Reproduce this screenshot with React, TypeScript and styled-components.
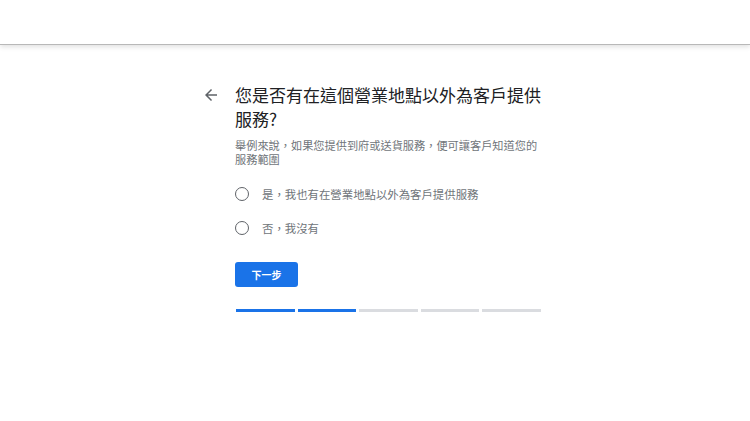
import React, { useState } from "react";
import styled, { createGlobalStyle } from "styled-components";

const GlobalStyle = createGlobalStyle`
  html, body {
    margin: 0;
    padding: 0;
    background: #ffffff;
    font-family: "Noto Sans CJK TC", "Noto Sans", Roboto, sans-serif;
    color: #202124;
  }
`;

const Page = styled("div")`
  width: 100%;
  min-height: 421px;
  display: flex;
  flex-direction: column;
`;

const Header = styled("header")`
  height: 44px;
  border-bottom: 1px solid #b8b8b8;
  box-shadow: 0 2px 5px rgba(0, 0, 0, 0.12);
`;

const Main = styled("main")`
  display: flex;
  justify-content: center;
  padding-top: 38px;
`;

const Layout = styled("div")`
  display: grid;
  grid-template-columns: 33px 310px;
  margin-right: 3px;
`;

const BackButton = styled("button")`
  border: 0;
  background: none;
  padding: 0;
  height: 24px;
  width: 18px;
  display: flex;
  align-items: center;
  cursor: pointer;
  color: #5f6368;
`;

const Content = styled("div")`
  display: flex;
  flex-direction: column;
`;

const Title = styled("h1")`
  margin: 0;
  font-size: 17px;
  line-height: 24px;
  font-weight: 400;
  color: #202124;
`;

const Subtitle = styled("p")`
  margin: 8px 0 0;
  font-size: 11.2px;
  line-height: 13.5px;
  color: #70757a;
`;

const Options = styled("div")`
  display: flex;
  flex-direction: column;
  margin-top: 11px;
`;

const Option = styled("label")`
  height: 34px;
  display: flex;
  align-items: center;
  gap: 13px;
  cursor: pointer;
`;

const Circle = styled("span")<{ $checked: boolean }>`
  width: 14px;
  height: 14px;
  box-sizing: border-box;
  border-radius: 50%;
  border: 1.8px solid ${(p) => (p.$checked ? "#1a73e8" : "#5f6368")};
  display: flex;
  align-items: center;
  justify-content: center;
  &::after {
    content: "";
    width: 6px;
    height: 6px;
    border-radius: 50%;
    background: ${(p) => (p.$checked ? "#1a73e8" : "transparent")};
  }
`;

const OptionText = styled("span")`
  font-size: 11.4px;
  color: #70757a;
`;

const NextButton = styled("button")`
  margin-top: 17px;
  width: 63px;
  height: 25px;
  border: 0;
  border-radius: 3px;
  background: #1a73e8;
  color: #ffffff;
  font-family: inherit;
  font-size: 10px;
  font-weight: 700;
  cursor: pointer;
`;

const Progress = styled("div")`
  margin-top: 22px;
  margin-left: 1px;
  width: 305px;
  display: grid;
  grid-template-columns: repeat(5, 1fr);
  gap: 3px;
`;

const Segment = styled("div")<{ $done: boolean }>`
  height: 3px;
  background: ${(p) => (p.$done ? "#1a73e8" : "#dadce0")};
`;

const options = ["是，我也有在營業地點以外為客戶提供服務", "否，我沒有"];

export default function App() {
  const [choice, setChoice] = useState<number | null>(null);
  const step = 2;

  return (
    <>
      <GlobalStyle />
      <Page>
        <Header />
        <Main>
          <Layout>
            <BackButton aria-label="返回">
              <svg width="18" height="18" viewBox="0 0 24 24" fill="currentColor">
                <path d="M20 11H7.83l5.59-5.59L12 4l-8 8 8 8 1.41-1.41L7.83 13H20v-2z" />
              </svg>
            </BackButton>
            <Content>
              <Title>您是否有在這個營業地點以外為客戶提供服務?</Title>
              <Subtitle>
                舉例來說，如果您提供到府或送貨服務，便可讓客戶知道您的服務範圍
              </Subtitle>
              <Options>
                {options.map((text, i) => (
                  <Option key={text} onClick={() => setChoice(i)}>
                    <Circle $checked={choice === i} />
                    <OptionText>{text}</OptionText>
                  </Option>
                ))}
              </Options>
              <div>
                <NextButton>下一步</NextButton>
              </div>
              <Progress>
                {[0, 1, 2, 3, 4].map((i) => (
                  <Segment key={i} $done={i < step} />
                ))}
              </Progress>
            </Content>
          </Layout>
        </Main>
      </Page>
    </>
  );
}
